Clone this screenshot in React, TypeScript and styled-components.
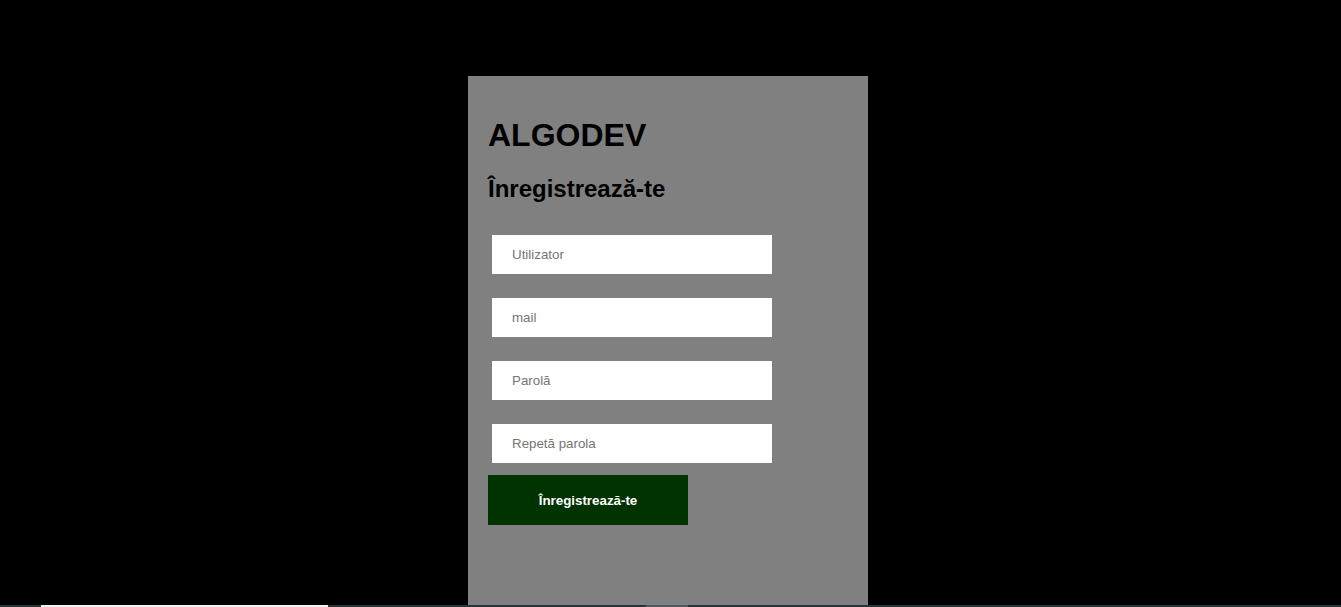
import React from "react";
import styled, { createGlobalStyle } from "styled-components";

const Global = createGlobalStyle`
  html, body { margin: 0; padding: 0; background: #000; }
  body { font-family: "Liberation Sans", Arial, sans-serif; overflow: hidden; }
`;

const Page = styled.div`
  height: 607px;
  display: flex;
  flex-direction: column;
`;

const Main = styled.main`
  flex: 1;
  display: flex;
  justify-content: center;
  padding: 76px 5px 0 0;
  min-height: 0;
`;

const Panel = styled.section`
  width: 400px;
  box-sizing: border-box;
  background: #808080;
  padding: 20px 20px 0 20px;
  display: flex;
  flex-direction: column;
`;

const Title = styled.h1`
  margin: 21px 0 0;
  font-size: 32px;
  line-height: 37px;
  font-weight: bold;
  color: #000;
`;

const Subtitle = styled.h2`
  margin: 21px 0 0;
  font-size: 24px;
  line-height: 28px;
  font-weight: bold;
  color: #000;
`;

const Form = styled.form`
  display: flex;
  flex-direction: column;
  align-items: flex-start;
  margin-top: 32px;
`;

const Field = styled.input`
  width: 280px;
  height: 39px;
  box-sizing: border-box;
  margin: 0 0 24px 4px;
  padding: 0 20px;
  border: 0;
  outline: none;
  background: #fff;
  font-family: "Liberation Sans", Arial, sans-serif;
  font-size: 13.333px;
  color: #000;
  &::placeholder { color: #757575; }
  &:last-of-type { margin-bottom: 12px; }
`;

const Submit = styled.button`
  width: 200px;
  height: 50px;
  border: 0;
  background: #003300;
  color: #fff;
  font-family: "Liberation Sans", Arial, sans-serif;
  font-size: 13.333px;
  font-weight: bold;
  cursor: pointer;
`;

const Strip = styled.div`
  height: 2px;
  flex: none;
  background: #27343a;
  display: flex;
`;

const StripSeg = styled.div<{ $left: number; $width: number; $color: string }>`
  margin-left: ${(p) => p.$left}px;
  width: ${(p) => p.$width}px;
  background: ${(p) => p.$color};
  box-sizing: border-box;
`;

export default function App() {
  return (
    <Page>
      <Global />
      <Main>
        <Panel>
          <Title>ALGODEV</Title>
          <Subtitle>Înregistrează-te</Subtitle>
          <Form onSubmit={(e) => e.preventDefault()}>
            <Field type="text" placeholder="Utilizator" />
            <Field type="email" placeholder="mail" />
            <Field type="password" placeholder="Parolă" />
            <Field type="password" placeholder="Repetă parola" />
            <Submit type="submit">Înregistrează-te</Submit>
          </Form>
        </Panel>
      </Main>
      <Strip>
        <StripSeg $left={41} $width={287} $color="#f4f4f4" />
        <StripSeg $left={318} $width={42} $color="#4e5a60" />
      </Strip>
    </Page>
  );
}
